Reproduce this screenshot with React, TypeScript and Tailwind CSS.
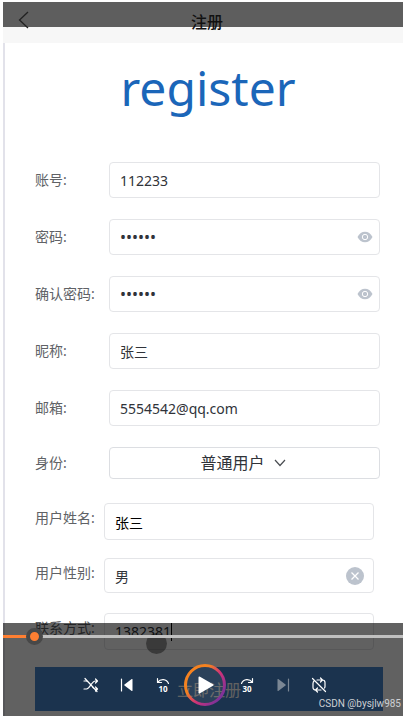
import { useState } from "react";
import type { ReactNode } from "react";

const fieldClass =
  "block w-full rounded border border-[#e4e5e8] bg-white px-2.5 text-[#303339] outline-none";

function Row({ id, label, narrow, children }: { id: string; label: string; narrow?: boolean; children: ReactNode }) {
  return (
    <div className="flex items-center">
      <label
        htmlFor={id}
        className={
          narrow
            ? "w-[69px] shrink-0 whitespace-nowrap pb-2 text-sm text-[#606266]"
            : "w-[74px] shrink-0 whitespace-nowrap text-sm text-[#606266]"
        }
      >
        {label}
      </label>
      <div className="min-w-0 flex-1">{children}</div>
    </div>
  );
}

function EyeIcon() {
  return (
    <svg viewBox="0 0 16 12" className="h-3 w-4" aria-hidden="true">
      <path d="M.5 6C2.3 2.6 4.8.7 8 .7S13.700 2.600 15.500 6C13.700 9.400 11.200 11.300 8 11.300S2.300 9.400.5 6Z" fill="#bcc3cd" />
      <circle cx="8" cy="6" r="2.700" fill="#bcc3cd" stroke="#fff" strokeWidth="1" />
    </svg>
  );
}

function PasswordField({ id, name }: { id: string; name: string }) {
  const [value, setValue] = useState("112233");
  const [shown, setShown] = useState(false);
  return (
    <div className="relative">
      <input
        id={id}
        name={name}
        type={shown ? "text" : "password"}
        value={value}
        onChange={(e) => setValue(e.target.value)}
        className={fieldClass + " h-9 pr-8 text-base"}
      />
      <button
        type="button"
        aria-label="显示密码"
        onClick={() => setShown(!shown)}
        className="absolute inset-y-0 right-[7px] flex items-center"
      >
        <EyeIcon />
      </button>
    </div>
  );
}

function ControlButton({ label, children }: { label: string; children: ReactNode }) {
  return (
    <button type="button" aria-label={label} className="flex h-10 w-9 items-center justify-center text-white">
      {children}
    </button>
  );
}

const stroke = { fill: "none", stroke: "currentColor", strokeWidth: 1.2, strokeLinecap: "round", strokeLinejoin: "round" } as const;

function Player() {
  const [position, setPosition] = useState(6);
  return (
    <div className="absolute inset-x-0 bottom-0 h-[93px] bg-black/62">
      <input
        type="range"
        aria-label="播放进度"
        min={0}
        max={100}
        value={position}
        onChange={(e) => setPosition(Number(e.target.value))}
        className="mt-1 block h-[18px] w-full appearance-none bg-transparent [&::-webkit-slider-runnable-track]:h-[3px] [&::-webkit-slider-runnable-track]:bg-[linear-gradient(to_right,#ff7f32_var(--played),#c0c0c0_var(--played))] [&::-webkit-slider-thumb]:-mt-[7px] [&::-webkit-slider-thumb]:size-[17px] [&::-webkit-slider-thumb]:appearance-none [&::-webkit-slider-thumb]:rounded-full [&::-webkit-slider-thumb]:border-4 [&::-webkit-slider-thumb]:border-[#484848] [&::-webkit-slider-thumb]:bg-[#ff7f32]"
        style={{ "--played": position + "%" } as React.CSSProperties}
      />
      <div className="mt-[18px] flex items-center justify-center pl-1">
        <ControlButton label="随机播放">
          <svg viewBox="0 0 16 16" className="size-4" aria-hidden="true">
            <g {...stroke}>
              <path d="M1 12h2.500c3.500 0 5-8 9-8h2M1 4h2c1.200 0 2.200.8 3 2M9.500 10.200c.8 1.100 1.800 1.800 3 1.800h2M12.500 2l2 2-2 2M12.500 10l2 2-2 2M2 1.500l12 13" />
            </g>
          </svg>
        </ControlButton>
        <ControlButton label="上一个">
          <svg viewBox="0 0 14 14" className="size-3.5" aria-hidden="true">
            <path d="M1.500 1v12" {...stroke} />
            <path d="M12.500 1.500v11a.5.5 0 0 1-.8.4L4.500 7.500a.6.6 0 0 1 0-1l7.200-5.400a.5.5 0 0 1 .8.4Z" fill="currentColor" />
          </svg>
        </ControlButton>
        <ControlButton label="后退 10 秒">
          <svg viewBox="0 0 16 16" className="size-4" aria-hidden="true">
            <path d="M2.500 1.500v4h4M2.800 5.200C5.500 1.500 11.500 1.500 13.500 6.500" {...stroke} />
            <text x="8" y="14.500" textAnchor="middle" fontSize="8" fontWeight="700" fill="currentColor">10</text>
          </svg>
        </ControlButton>
        <button type="button" aria-label="播放" className="flex h-11 w-12 items-center justify-center">
          <svg viewBox="0 0 44 44" className="size-11" aria-hidden="true">
            <defs>
              <linearGradient id="ring" x1="0.1" y1="0.1" x2="0.95" y2="0.8">
                <stop offset="0.3" stopColor="#f58220" />
                <stop offset="0.6" stopColor="#cf3278" />
                <stop offset="1" stopColor="#78329b" />
              </linearGradient>
            </defs>
            <circle cx="22" cy="22" r="19.500" fill="#ffffff12" stroke="url(#ring)" strokeWidth="3" />
            <path d="M15.500 14.500v15a1 1 0 0 0 1.500.8l13-7.500a.9.9 0 0 0 0-1.600l-13-7.500a1 1 0 0 0-1.500.8Z" fill="#fff" />
          </svg>
        </button>
        <ControlButton label="前进 30 秒">
          <svg viewBox="0 0 16 16" className="size-4" aria-hidden="true">
            <path d="M13.500 1.500v4h-4M13.200 5.200C10.500 1.500 4.500 1.500 2.500 6.500" {...stroke} />
            <text x="8" y="14.500" textAnchor="middle" fontSize="8" fontWeight="700" fill="currentColor">30</text>
          </svg>
        </ControlButton>
        <ControlButton label="下一个">
          <svg viewBox="0 0 14 14" className="size-3.5 text-[#7b8794]" aria-hidden="true">
            <path d="M12.500 1v12" {...stroke} />
            <path d="M1.500 1.500v11a.5.5 0 0 0 .8.4l7.200-5.400a.6.6 0 0 0 0-1L2.300 1.100a.5.5 0 0 0-.8.4Z" fill="currentColor" />
          </svg>
        </ControlButton>
        <ControlButton label="循环播放">
          <svg viewBox="0 0 16 16" className="size-4" aria-hidden="true">
            <g {...stroke}>
              <path d="M6 3h5.500A2.500 2.500 0 0 1 14 5.500v4a2.500 2.500 0 0 1-.5 1.500M10 13H4.500A2.500 2.500 0 0 1 2 10.500v-4C2 5 2.700 4 3.500 3.500M9.500 1l2 2-2 2M6.500 11l-2 2 2 2M1.500 1.500l13 13" />
            </g>
          </svg>
        </ControlButton>
      </div>
      <p className="absolute right-0.5 bottom-1 font-[Roboto,'Liberation_Sans',sans-serif] text-[10px] leading-4 text-[#cdd0d3]">
        CSDN @bysjlw985
      </p>
    </div>
  );
}

export default function App() {
  const [gender, setGender] = useState("男");
  return (
    <div className="bg-white px-[3px] pt-0.5 font-['Noto_Sans','Noto_Sans_CJK_SC',sans-serif]">
      <main className="relative">
        <header className="relative flex h-[41px] items-center justify-center bg-[#f7f7f7]">
          <div className="absolute inset-x-0 top-0 h-[25px] bg-black/62" />
          <button type="button" aria-label="返回" className="absolute top-2 left-3.5 text-[#222]">
            <svg viewBox="0 0 14 20" className="h-5 w-3.5" aria-hidden="true">
              <path d="M11 2 2.500 10l8.500 8" fill="none" stroke="currentColor" strokeWidth="1.300" />
            </svg>
          </button>
          <h1 className="relative pb-0.5 pl-2 text-base font-medium text-[#111]">注册</h1>
        </header>

        <form className="border-l-2 border-[#e2e2ea] pb-[5px]" onSubmit={(e) => e.preventDefault()}>
          <h2 className="flex h-[119px] justify-center pt-3 pl-2 text-5xl leading-[66px] text-[#1b66b9]">register</h2>

          <div className="flex flex-col gap-[21px] pr-[23px] pl-[30px]">
            <Row id="account" label="账号:">
              <input id="account" type="text" defaultValue="112233" className={fieldClass + " h-9 text-sm"} />
            </Row>
            <Row id="password" label="密码:">
              <PasswordField id="password" name="password" />
            </Row>
            <Row id="confirm" label="确认密码:">
              <PasswordField id="confirm" name="confirm" />
            </Row>
            <Row id="nickname" label="昵称:">
              <input id="nickname" type="text" defaultValue="张三" className={fieldClass + " h-9 text-sm"} />
            </Row>
            <Row id="email" label="邮箱:">
              <input id="email" type="text" defaultValue="5554542@qq.com" className={fieldClass + " h-9 text-sm"} />
            </Row>
            <Row id="role" label="身份:">
              <div className="grid">
                <select
                  id="role"
                  className="col-start-1 row-start-1 h-8 w-full appearance-none rounded border border-[#dcdee2] bg-white pr-6 text-base leading-6 text-[#303339] outline-none [text-align-last:center]"
                >
                  <option>普通用户</option>
                </select>
                <svg
                  viewBox="0 0 12 8"
                  className="pointer-events-none col-start-1 row-start-1 ml-[70px] h-2 w-3 self-center justify-self-center"
                  aria-hidden="true"
                >
                  <path d="m1 1 5 5.500L11 1" fill="none" stroke="#4a4d52" strokeWidth="1.200" />
                </svg>
              </div>
            </Row>
          </div>

          <div className="mt-6 flex flex-col gap-[18px] pr-[29px] pl-[30px]">
            <Row id="name" label="用户姓名:" narrow>
              <input id="name" type="text" defaultValue="张三" className={fieldClass + " h-[37px] text-sm text-black"} />
            </Row>
            <Row id="gender" label="用户性别:" narrow>
              <div className="pb-0.5">
                <div className="relative">
                  <input
                    id="gender"
                    type="text"
                    value={gender}
                    onChange={(e) => setGender(e.target.value)}
                    className={fieldClass + " h-[35px] text-sm"}
                  />
                  <button
                    type="button"
                    aria-label="清除"
                    onClick={() => setGender("")}
                    className="absolute inset-y-0 right-2.5 flex items-center"
                  >
                    <svg viewBox="0 0 18 18" className="size-[18px]" aria-hidden="true">
                      <circle cx="9" cy="9" r="9" fill="#bcc3cd" />
                      <path d="m5.500 5.500 7 7m0-7-7 7" stroke="#fff" strokeWidth="1.300" />
                    </svg>
                  </button>
                </div>
              </div>
            </Row>
            <Row id="phone" label="联系方式:" narrow>
              <div className="relative">
                <input id="phone" type="text" defaultValue="1382381" className={fieldClass + " h-[37px] text-sm"} />
                <span className="absolute top-2.5 left-[67px] h-[18px] w-px bg-black" />
                <span className="absolute top-5 left-[42px] size-[21px] rounded-full bg-black/40" />
              </div>
            </Row>
          </div>

          <div className="mt-[17px] pr-5 pl-[30px]">
            <button type="submit" className="block h-11 w-full bg-[#4886cc] pt-0.5 text-base text-white">
              立即注册
            </button>
          </div>
        </form>

        <Player />
      </main>
    </div>
  );
}
